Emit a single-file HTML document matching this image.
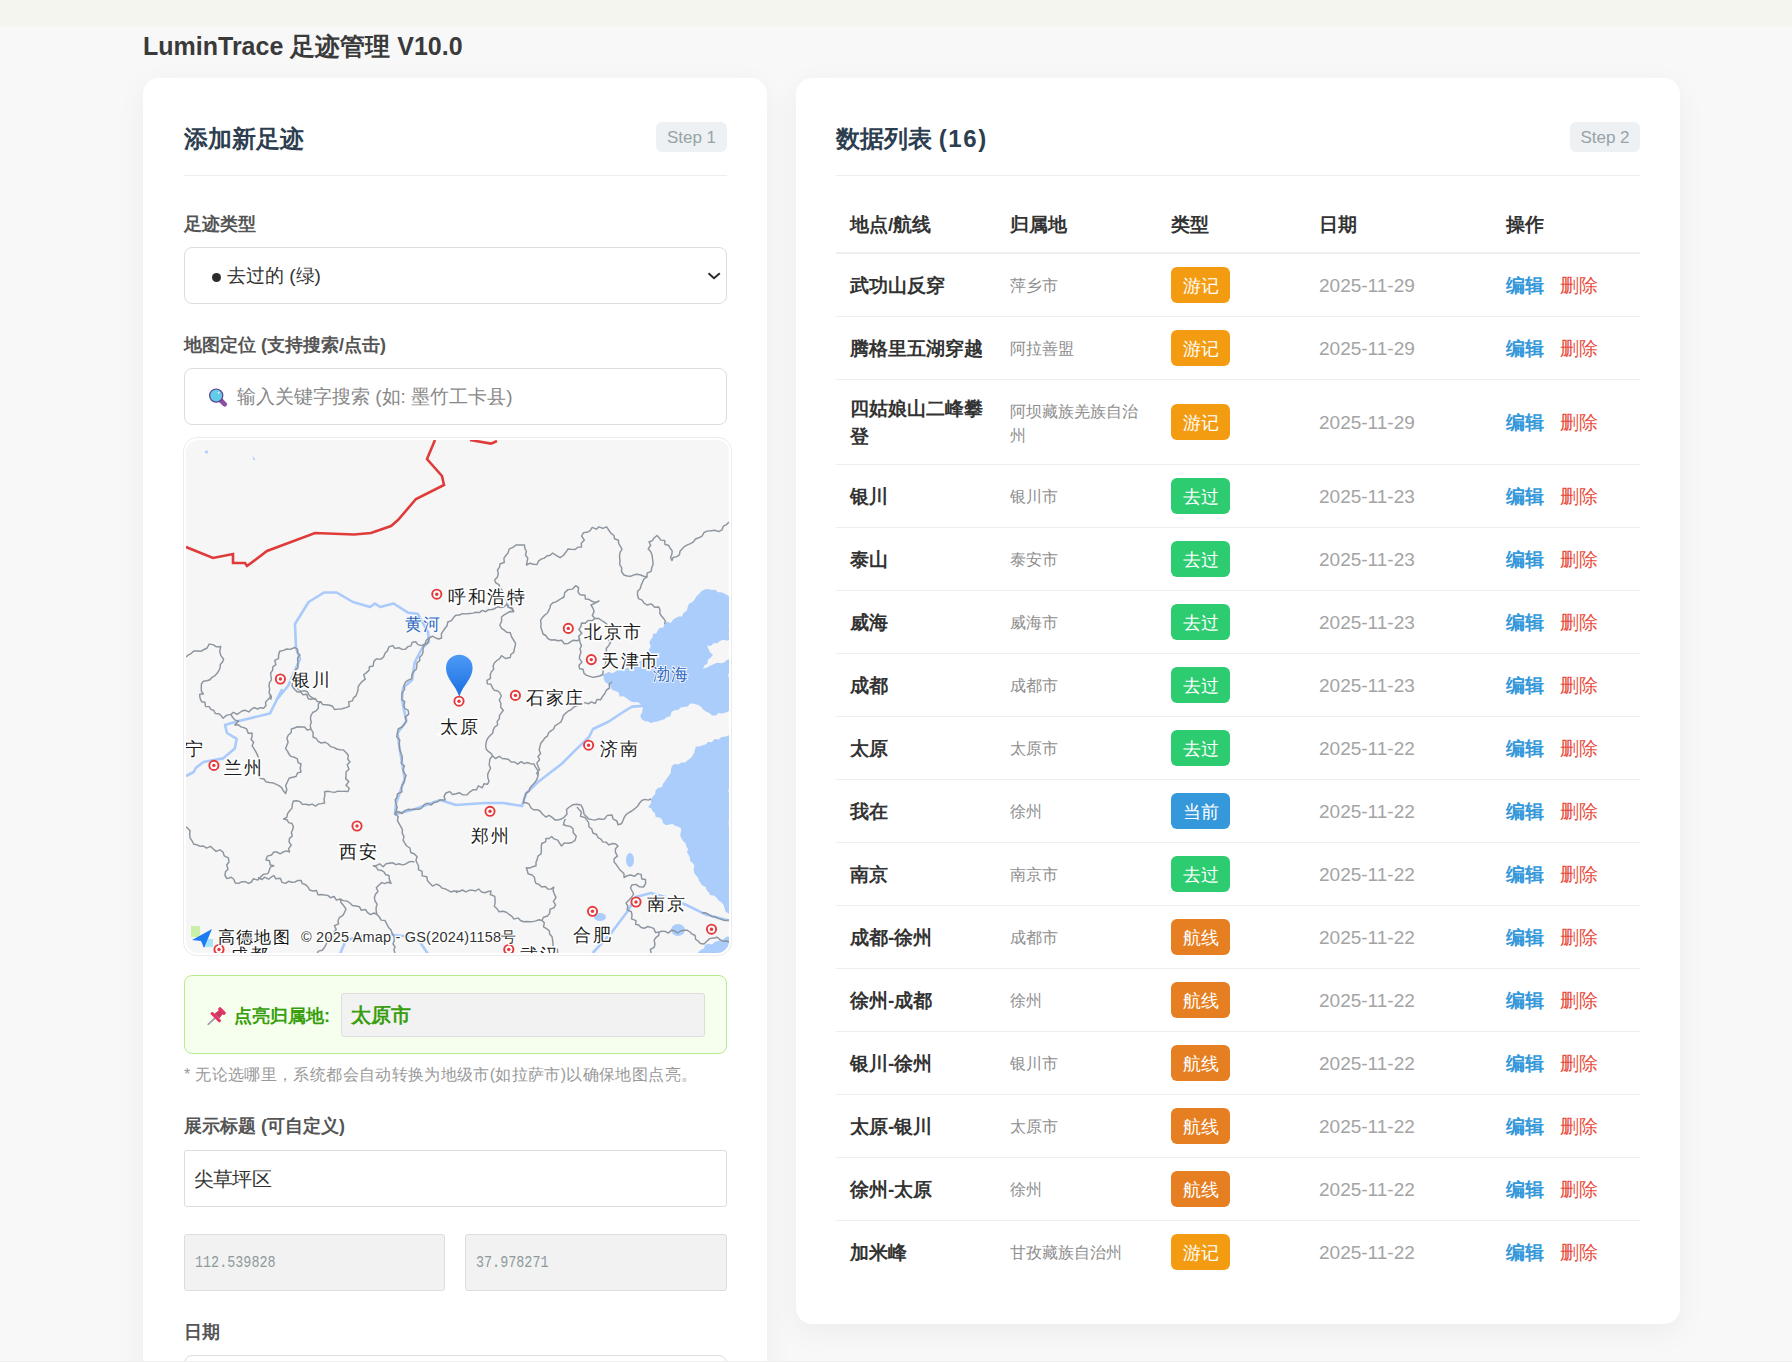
<!DOCTYPE html>
<html><head><meta charset="utf-8">
<style>
*{box-sizing:border-box;margin:0;padding:0}
html,body{width:1792px;height:1362px;overflow:hidden}
body{background:#f8f8f8;font-family:"Liberation Sans",sans-serif;position:relative;color:#333}
.topbar{position:absolute;left:0;top:0;width:1792px;height:27px;background:#f5f5f0}
.ab{position:absolute;white-space:nowrap}
.h1{left:143px;top:30px;font-size:25px;font-weight:bold;color:#3a3a3a;line-height:32px}
.card{position:absolute;background:#fff;border-radius:16px;box-shadow:0 8px 30px rgba(0,0,0,0.05)}
.ctitle{font-size:24px;font-weight:bold;color:#2c3e50;line-height:30px}
.step{background:#edf1f4;color:#97a3a6;font-size:17px;border-radius:6px;height:30px;line-height:32px;text-align:center}
.sep{height:1px;background:#eee}
.label{font-size:18px;font-weight:bold;color:#555;line-height:24px}
.input{border:1px solid #ddd;border-radius:8px;background:#fff}
.th{font-size:19px;font-weight:bold;color:#333;line-height:24px;top:213px}
.row{position:absolute;left:836px;width:804px;border-bottom:1px solid #efefeb}
.row div{position:absolute;white-space:nowrap}
.nm{left:14px;font-size:19px;font-weight:bold;color:#333;line-height:28px}
.rg{left:174px;font-size:16px;color:#8e8e8e;line-height:24px}
.bd{left:335px;width:59px;height:36px;border-radius:6px;color:#fff;font-size:18px;line-height:38px;text-align:center}
.dt{left:483px;font-size:19px;color:#a4a4a4;line-height:24px}
.ed{left:670px;font-size:19px;font-weight:bold;color:#3498db;line-height:24px}
.de{left:724px;font-size:19px;color:#e74c3c;line-height:24px}
.y{background:#f39c12}.g{background:#2ecc71}.b{background:#3498db}.o{background:#e67e22}
</style></head><body>
<div class="topbar"></div>
<div class="ab h1">LuminTrace 足迹管理 V10.0</div>

<!-- LEFT CARD -->
<div class="card" style="left:143px;top:78px;width:624px;height:1320px"></div>
<div class="ab ctitle" style="left:184px;top:124px">添加新足迹</div>
<div class="ab step" style="left:656px;top:122px;width:71px">Step 1</div>
<div class="ab sep" style="left:184px;top:175px;width:543px"></div>

<div class="ab label" style="left:184px;top:212px">足迹类型</div>
<div class="ab input" style="left:184px;top:247px;width:543px;height:57px"></div>
<div class="ab" style="left:212px;top:273px;width:9px;height:9px;border-radius:50%;background:#2b2b2b"></div><div class="ab" style="left:227px;top:263px;font-size:19px;color:#333;line-height:26px">去过的 (绿)</div>
<svg class="ab" style="left:706px;top:268px" width="16" height="14" viewBox="0 0 16 14"><path d="M2.5 5.3 L8 10.2 L13.8 5.3" fill="none" stroke="#2a2a2a" stroke-width="2"/></svg>

<div class="ab label" style="left:184px;top:333px">地图定位 (支持搜索/点击)</div>
<div class="ab input" style="left:184px;top:368px;width:543px;height:57px"></div>
<svg class="ab" style="left:207px;top:387px" width="22" height="21" viewBox="0 0 22 21"><line x1="14" y1="13.5" x2="17.8" y2="17.3" stroke="#8d4f9f" stroke-width="4.6" stroke-linecap="round"/><circle cx="9.2" cy="8.6" r="6.6" fill="#62cbea" stroke="#5a3f8a" stroke-width="1.2"/><circle cx="11.6" cy="5.8" r="1.1" fill="#cdeefa"/></svg>
<div class="ab" style="left:237px;top:384px;font-size:19px;color:#888;line-height:26px">输入关键字搜索 (如: 墨竹工卡县)</div>

<!-- MAP -->
<div class="ab" style="left:183px;top:437px;width:549px;height:519px;border:1px solid #ececec;border-radius:14px;background:#fff"></div><div class="ab" style="left:186px;top:440px;width:543px;height:513px;border-radius:12px;background:#f6f6f6;overflow:hidden" id="map"><svg style="position:absolute;left:0;top:0" width="543" height="513" viewBox="186 440 543 513">
<path d="M603.0,674.5 L605.9,673.3 L608.7,672.0 L612.1,673.2 L615.0,672.0 L617.7,669.8 L621.0,670.8 L623.9,669.5 L626.7,667.8 L630.0,668.7 L633.0,666.5 L635.0,663.0 L638.9,662.0 L642.0,660.0 L642.5,656.5 L644.3,653.9 L647.0,651.9 L649.0,649.4 L650.9,646.6 L649.3,642.9 L650.4,639.9 L652.6,637.2 L653.0,634.0 L656.4,633.3 L657.8,630.3 L659.7,627.9 L663.4,627.6 L664.6,624.3 L666.8,621.5 L670.9,622.9 L673.0,619.8 L675.7,618.0 L678.5,616.6 L682.0,616.6 L683.3,613.0 L686.8,610.8 L687.7,607.0 L689.0,603.7 L692.4,602.0 L694.7,599.6 L696.2,596.4 L698.9,594.2 L701.0,591.5 L704.5,589.4 L708.1,588.9 L712.0,590.0 L715.4,589.8 L718.0,592.3 L721.4,592.3 L724.4,593.4 L727.6,595.2 L730.0,598.0 L729.7,601.0 L730.2,604.0 L730.7,607.0 L728.9,610.0 L729.3,613.0 L730.9,616.0 L729.7,619.0 L729.9,622.0 L728.6,625.0 L729.2,628.0 L730.8,631.0 L728.3,634.0 L731.4,637.0 L730.0,640.0 L726.7,640.6 L723.2,639.7 L720.0,641.0 L717.2,643.3 L713.5,643.3 L710.8,646.0 L707.0,645.6 L708.5,649.1 L710.2,652.4 L713.0,655.0 L710.8,657.6 L707.9,659.7 L707.5,663.6 L704.4,665.5 L703.0,668.7 L706.8,667.4 L710.4,665.8 L714.0,664.0 L717.2,662.8 L720.8,663.2 L724.1,662.5 L726.8,659.9 L730.0,659.0 L729.4,662.2 L731.6,665.3 L729.3,668.5 L729.5,671.6 L728.2,674.8 L728.8,677.9 L730.8,681.1 L730.4,684.2 L729.4,687.4 L731.7,690.6 L730.1,693.7 L731.2,696.9 L731.4,700.0 L731.6,703.2 L729.0,706.3 L730.0,709.5 L727.7,711.9 L724.8,712.7 L721.8,713.4 L718.3,713.0 L716.0,715.4 L712.1,715.5 L709.3,713.0 L706.0,711.5 L703.1,709.4 L700.8,706.4 L697.6,704.7 L694.0,703.7 L690.3,703.4 L687.5,706.4 L684.0,706.9 L680.6,707.6 L678.2,709.9 L674.4,710.2 L671.5,711.9 L670.4,716.2 L667.0,717.0 L664.2,719.3 L660.9,720.3 L657.7,721.5 L654.2,721.9 L651.0,723.0 L648.0,721.4 L644.3,721.1 L641.5,719.0 L640.2,715.4 L642.2,712.3 L642.5,708.9 L643.5,705.6 L640.7,704.5 L638.2,702.2 L635.1,702.2 L632.0,702.0 L629.2,700.2 L626.5,698.2 L623.8,696.3 L619.7,696.5 L618.5,692.2 L615.4,690.9 L612.0,690.0 L610.7,686.4 L608.1,684.0 L605.0,682.0 L603.6,678.3 L603.0,674.5 M730.0,735.0 L725.9,736.4 L721.6,737.0 L718.7,739.6 L714.6,739.0 L711.9,742.2 L708.0,742.0 L705.6,744.6 L702.4,745.3 L699.4,746.6 L696.0,746.6 L694.9,749.6 L694.2,752.8 L692.7,755.6 L690.7,758.0 L688.0,760.0 L685.1,762.4 L681.5,762.5 L678.5,764.6 L674.7,764.0 L671.9,766.1 L671.0,769.4 L670.8,773.1 L668.8,775.7 L666.8,778.4 L665.1,781.1 L663.0,783.7 L662.1,787.1 L658.0,788.0 L655.6,790.3 L655.1,794.0 L653.0,796.5 L651.0,799.0 L650.9,803.5 L648.0,807.0 L651.2,808.3 L652.7,811.2 L655.0,813.3 L655.7,817.0 L659.6,817.6 L662.1,819.5 L663.0,823.0 L665.8,825.3 L669.3,824.6 L672.7,824.0 L675.5,826.1 L678.7,826.7 L681.3,829.0 L680.7,832.4 L680.2,835.8 L681.6,838.5 L683.2,841.2 L685.7,843.5 L686.3,846.5 L688.0,849.1 L687.0,852.6 L688.9,855.2 L690.0,858.0 L690.2,861.2 L692.9,863.3 L694.4,866.0 L693.5,869.6 L694.1,872.6 L695.7,875.2 L698.0,877.5 L698.8,880.6 L700.5,883.1 L702.4,885.5 L705.7,886.9 L706.5,890.0 L708.7,892.2 L710.0,895.0 L713.7,895.6 L716.4,897.6 L718.6,900.4 L721.4,902.3 L723.6,905.0 L724.6,908.2 L725.4,911.6 L728.6,913.6 L730.0,916.6 L731.6,913.6 L731.8,910.5 L731.6,907.5 L729.5,904.5 L729.0,901.5 L729.0,898.4 L728.9,895.4 L728.9,892.4 L730.4,889.4 L731.4,886.3 L731.2,883.3 L729.9,880.3 L730.6,877.3 L731.1,874.2 L728.5,871.2 L730.6,868.2 L731.5,865.1 L731.0,862.1 L730.9,859.1 L729.9,856.1 L728.8,853.0 L731.0,850.0 L729.4,847.0 L731.1,844.0 L731.7,840.9 L729.6,837.9 L729.6,834.9 L731.6,831.9 L730.8,828.8 L728.8,825.8 L728.7,822.8 L728.7,819.7 L731.5,816.7 L731.1,813.7 L728.7,810.7 L731.2,807.6 L731.7,804.6 L730.6,801.6 L729.5,798.6 L730.2,795.5 L728.7,792.5 L728.3,789.5 L731.7,786.5 L730.5,783.4 L730.1,780.4 L731.6,777.4 L729.8,774.3 L731.3,771.3 L731.2,768.3 L729.0,765.3 L729.1,762.2 L729.3,759.2 L729.1,756.2 L730.3,753.2 L729.1,750.1 L729.7,747.1 L728.7,744.1 L731.5,741.1 L729.5,738.0 L730.0,735.0 M697.0,954.0 L698.9,951.6 L701.2,949.7 L704.1,948.2 L705.0,945.0 L708.2,943.7 L711.9,944.4 L714.8,942.0 L718.0,941.0 L721.0,940.1 L724.0,939.1 L726.5,936.4 L730.0,937.0 L730.2,940.4 L731.1,943.8 L731.8,947.2 L728.9,950.6 L730.0,954.0 L727.0,955.2 L724.0,954.1 L721.0,953.2 L718.0,953.8 L715.0,954.6 L712.0,953.9 L709.0,953.8 L706.0,953.0 L703.0,955.4 L700.0,953.8 L697.0,954.0 Z" fill="#abcdfb"/>
<g fill="#abcdfb"><ellipse cx="600" cy="917" rx="6" ry="4"/><ellipse cx="630" cy="860" rx="4" ry="7"/><ellipse cx="678" cy="930" rx="7" ry="6"/><circle cx="206.5" cy="452" r="1.6"/><path d="M252.5,456 L255.5,459.5 L253.5,460 Z"/></g>
<path d="M276.7,699.6 L288,686 L300,659 L296,647.5 L295,624 L308.6,602 L324,592.5 L336.6,592.5 L353,602 L370,607 L375,603.5 L380,607 L393.5,603.5 L408,612.7 L417.7,613.7 L428,632 L429,641.7 L422.5,647.5 L414.8,662 L412,680 L403,688 L402,699.6 L404,710 L406.4,721 L397.6,733 L399.4,747.3 L404.7,779 L395.9,803.7 L395,814.2 L415.2,809 L440,800 L456,805 L485,803 L503,803 L522,806 L526,793.5 L538,782 L561.5,764 L577,748.6 L589,737 L593,729 L608,722 L624,711.5 L632,706.6 L646.4,705.6
M186,776 L193.8,772 L195.7,768 L203.5,762 L223,758.4 L234.8,748.6 L236.7,738.8 L227,733 L225,725 L238.7,721 L270,713.4 L281.7,690 L276.7,699.6
M592.7,953 L612,932 L628,910.7 L635.7,897 L651,893 L665,897 L686.5,905 L706,914.6 L729,920.5
M340,954 L346,940 L365,935.5 L389,934.5 L408,936.5 L420,942 L428,954" fill="none" stroke="#a9cafb" stroke-width="2.6" stroke-linejoin="round"/>
<path d="M506.8,604.7 L504.1,606.7 L501.1,607.5 L497.4,606.7 L494.7,608.7 L491.7,609.5 L488.4,609.7 L485.7,611.7 L482.3,610.4 L479.4,612.6 L476.1,612.3 L473.0,613.1 L469.8,613.5 L466.3,613.9 L462.7,613.6 L459.2,615.0 L455.7,615.2 L453.4,617.8 L451.4,620.6 L447.8,622.0 L447.0,625.8 L444.9,628.5 L442.9,631.3 L441.3,634.2 L441.6,638.0 L438.5,639.0 L435.5,637.8 L432.4,636.2 L429.3,638.0 L427.5,643.4 L424.2,645.2 L423.0,648.7 L423.1,652.1 L422.0,654.9 L419.6,657.3 L419.8,660.6 L417.0,662.8 L416.8,666.1 L416.3,669.3 L413.5,671.6 L411.9,674.9 L411.7,678.6 L408.3,680.1 L405.4,682.2 L403.8,685.7 L404.7,689.4 L402.0,692.6 L401.8,696.2 L402.0,699.8 L404.8,701.7 L403.8,705.8 L405.0,708.6 L408.2,710.3 L408.7,714.1 L405.2,717.1 L406.4,721.0 L404.5,724.2 L402.0,727.0 L398.2,728.8 L397.6,733.0 L396.7,736.7 L399.8,740.0 L399.2,743.7 L399.4,747.3 L399.9,750.5 L401.1,753.5 L402.2,756.6 L402.2,759.9 L401.2,763.3 L404.5,766.0 L402.9,769.5 L403.9,772.6 L406.1,775.5 L404.7,779.0 L404.2,782.3 L402.0,785.0 L401.4,788.2 L401.9,791.9 L397.4,793.8 L397.0,797.1 L395.2,800.0 L395.9,803.7 L397.2,807.3 L396.2,810.8 L395.0,814.2 L397.9,811.5 L402.0,813.5 L404.9,810.7 L408.1,809.3 L411.8,809.6 L415.2,809.0 L418.9,809.4 L421.8,807.9 L424.2,804.7 L427.1,803.2 L431.3,805.0 L433.9,802.5 L437.2,801.9 L440.0,800.0 L445.2,800.0 L444.0,796.3 L446.0,793.0 L449.6,791.6 L452.6,794.5 L456.1,793.8 L459.6,792.8 L462.8,794.9 L467.1,794.7 L470.0,791.8 L473.3,789.6 L476.5,789.7 L478.4,785.9 L482.3,787.8 L484.0,783.7 L487.4,784.3 L489.1,781.2 L487.8,777.8 L487.7,774.6 L488.8,771.5 L490.6,768.4 L489.2,765.0 L489.5,761.7 L490.2,758.5 L492.7,756.0 L491.0,753.3 L488.3,751.4 L486.2,749.1 L485.7,745.6 L486.3,741.8 L487.6,738.5 L489.9,735.7 L492.7,733.2 L493.3,730.0 L494.6,727.1 L497.6,725.0 L497.2,721.4 L499.3,718.9 L499.5,715.5 L501.4,712.9 L503.3,710.3 L500.7,707.2 L500.9,703.5 L499.3,700.1 L501.4,696.0 L499.8,692.7 L497.4,690.8 L494.1,690.2 L492.3,687.5 L490.9,684.2 L487.4,683.9 L486.9,680.4 L490.6,678.3 L490.2,674.8 L491.4,671.8 L493.7,669.3 L493.1,665.7 L494.5,662.8 L496.9,660.5 L499.7,658.6 L501.5,655.7 L505.5,658.5 L510.3,657.5 L510.8,654.5 L513.7,652.3 L514.3,649.3 L515.0,646.4 L515.6,643.4 L513.5,640.0 L511.5,636.6 L510.3,632.8 L506.6,632.3 L504.2,630.1 L501.4,628.3 L499.8,625.0 L501.6,621.2 L501.5,617.0 L504.2,614.8 L507.1,613.1 L510.1,611.5 L513.8,611.7 L512.4,608.4 L510.2,606.0 L506.8,604.7 L506.8,604.7 M494.6,580.0 L495.8,582.9 L498.9,584.6 L500.0,587.6 L502.3,590.4 L503.4,593.8 L504.1,597.2 L506.6,600.0 L506.9,603.7 L508.0,607.0 L511.5,608.6 L513.8,611.7 M494.6,580.0 L497.3,577.2 L498.3,573.9 L497.5,570.0 L499.4,567.3 L500.1,563.8 L504.3,562.5 L503.9,558.3 L505.8,555.5 L508.0,553.0 L509.3,548.9 L513.0,547.3 L516.0,545.0 L520.2,544.9 L524.5,545.0 L524.8,548.3 L526.4,551.5 L525.5,555.0 L527.8,558.1 L527.1,561.6 L526.5,565.0 L529.9,563.2 L533.5,564.3 L537.0,564.5 L538.5,561.1 L541.1,559.1 L544.3,558.1 L546.8,556.0 L550.2,555.2 L552.6,553.0 L556.2,555.4 L560.0,557.7 L563.4,555.5 L565.8,552.3 L568.0,549.0 L571.5,549.4 L575.0,549.5 L578.1,547.1 L581.5,547.0 L581.3,543.3 L584.4,540.1 L581.6,536.0 L583.5,532.6 L586.9,532.3 L589.9,530.8 L592.2,527.4 L596.4,529.2 L599.0,526.8 L602.8,528.4 L606.6,526.8 L608.7,530.0 L610.8,533.2 L614.0,535.5 L614.5,538.8 L618.4,540.2 L618.7,543.6 L620.4,546.3 L622.0,549.0 L620.0,552.6 L619.5,556.5 L620.0,560.6 L619.7,564.5 L621.7,567.9 L621.5,571.8 L624.0,575.0 L627.2,576.0 L630.5,576.3 L634.0,574.8 L637.3,574.3 L640.6,575.0 L643.8,576.2 L647.0,577.0 L647.1,573.2 L651.2,571.3 L651.7,567.7 L653.0,564.5 L652.9,561.2 L652.4,558.0 L652.0,554.7 L650.7,551.7 L648.2,548.8 L650.7,545.0 L649.0,542.0 L652.3,540.6 L654.3,537.7 L657.0,535.5 L659.1,537.7 L660.9,540.1 L664.7,540.5 L665.0,544.5 L668.5,545.2 L670.0,548.0 L672.2,550.9 L671.9,554.2 L670.6,557.6 L672.0,560.6 L673.1,557.5 L676.7,556.6 L679.4,554.9 L680.0,551.3 L682.0,549.0 L684.4,546.6 L687.4,544.9 L690.5,543.6 L693.4,541.9 L695.5,539.0 L698.8,537.8 L702.0,536.2 L704.0,532.5 L707.2,531.1 L711.0,530.7 L714.9,530.2 L718.6,531.6 L721.9,529.9 L723.3,526.2 L726.6,524.6 L729.0,522.0 M541.0,624.0 L540.6,620.4 L542.2,617.8 L544.3,615.4 L547.1,613.5 L548.5,610.8 L549.9,608.0 L550.6,605.0 L552.9,602.7 L556.0,601.9 L558.6,600.1 L561.3,598.5 L564.0,597.0 L564.7,592.6 L568.0,589.6 L572.6,589.1 L575.7,585.7 L578.6,587.7 L578.0,592.1 L580.1,594.7 L585.0,595.2 L585.4,599.0 L588.8,599.3 L592.0,601.3 L595.3,602.4 L599.0,601.0 L595.1,603.2 L591.0,605.0 L592.9,608.1 L594.1,611.4 L592.3,615.6 L595.0,618.5 L592.0,620.7 L588.1,620.4 L585.3,623.2 L581.5,623.0 L581.0,626.3 L578.9,629.5 L581.8,633.2 L578.7,636.3 L579.6,639.8 L576.7,640.7 L573.3,640.2 L570.6,641.9 L568.0,643.6 L564.3,643.7 L561.7,640.2 L557.9,640.8 L554.5,639.8 L550.8,640.0 L547.9,638.7 L545.9,635.5 L543.0,634.0 L542.1,630.7 L540.9,627.5 L541.0,624.0 M595.0,618.5 L598.8,618.5 L601.7,620.5 L604.7,622.4 L607.2,624.5 L607.5,628.3 L610.5,630.0 L612.1,633.4 L608.7,636.1 L608.0,639.2 L610.5,642.7 L608.6,645.6 L606.3,648.5 L606.5,651.9 L605.1,654.9 L606.8,658.6 L605.9,661.8 L605.2,665.0 L602.1,667.7 L603.1,671.2 L602.8,674.5 L599.7,676.0 L596.3,676.7 L593.0,677.4 L589.8,676.4 L586.7,675.4 L584.1,673.5 L583.0,669.3 L579.6,668.7 L579.0,665.3 L581.9,662.2 L579.4,658.7 L579.8,655.4 L581.0,652.2 L580.0,648.8 L581.5,645.6 L580.1,642.9 L579.6,639.8 M647.0,577.0 L643.8,579.1 L642.5,582.3 L641.1,585.4 L640.2,588.8 L637.6,591.2 L637.5,595.0 L638.6,598.7 L642.1,600.1 L644.0,603.1 L647.0,605.0 L651.2,603.9 L654.7,607.2 L658.8,607.0 L660.0,609.8 L659.8,613.1 L661.2,615.8 L663.5,618.3 L665.3,620.8 L664.6,624.3 M492.7,756.0 L495.4,758.5 L499.4,756.3 L502.1,758.5 L505.4,758.8 L508.6,759.5 L511.2,762.1 L514.6,762.0 L517.6,764.2 L521.2,761.7 L524.2,763.6 L527.6,762.5 L530.7,763.9 L534.0,764.0 L535.4,766.9 L537.3,769.6 L538.3,772.6 L538.0,776.0 L536.8,772.7 L539.6,769.5 L538.0,766.2 L536.9,762.9 L539.6,759.7 L538.0,756.4 L540.6,753.5 L539.1,749.8 L540.0,746.6 L540.8,743.2 L542.9,740.8 L544.6,738.1 L547.3,736.2 L548.5,733.0 L550.9,730.9 L553.7,729.0 L554.9,725.8 L557.8,724.0 L560.8,722.1 L562.3,719.2 L563.2,715.8 L565.4,713.4 L568.1,711.2 L571.3,709.6 L573.8,707.1 L577.0,705.6 L580.8,704.3 L584.6,702.6 L588.8,703.7 L591.4,701.9 L595.2,703.5 L597.1,699.4 L600.5,699.8 L602.5,696.5 L604.9,693.5 L606.4,690.0 L609.5,688.2 L609.2,684.0 L612.0,682.0 M538.0,776.0 L536.8,779.5 L534.8,782.6 L532.3,785.2 L530.0,788.0 L529.0,791.1 L525.9,793.3 L525.1,796.5 L523.8,799.4 L524.0,803.0 M522.4,803.0 L526.1,802.6 L529.0,804.0 L530.9,807.8 L533.5,809.8 L537.1,809.6 L540.0,811.0 L542.6,814.2 L545.8,817.0 L549.2,815.4 L552.1,817.4 L555.0,819.9 L558.2,819.9 L561.5,819.0 L564.6,816.8 L567.0,814.0 L566.5,809.5 L569.3,807.0 L572.9,804.8 L576.9,804.3 L581.0,805.0 L582.5,807.8 L583.5,811.0 L584.1,814.3 L586.5,816.6 L588.8,819.0 L591.9,819.6 L595.0,820.1 L598.2,818.8 L601.3,819.2 L604.4,819.0 L607.3,815.4 L612.0,815.0 L613.0,818.9 L616.9,821.0 L618.0,824.8 L621.5,823.7 L623.0,820.6 L624.3,817.3 L626.1,814.5 L628.8,812.6 L631.8,811.0 L634.8,808.7 L637.6,806.2 L639.6,803.0 L641.9,800.5 L644.7,799.4 L648.2,800.1 L651.0,799.0 M565.4,819.0 L564.1,821.8 L563.4,824.8 L566.8,825.7 L570.2,826.4 L573.0,828.7 L573.3,832.7 L576.3,836.2 L575.0,840.4 L571.9,842.5 L568.3,843.3 L564.2,842.9 L561.5,846.0 L559.5,843.2 L557.7,840.1 L554.1,838.9 L551.7,836.5 L549.2,838.5 L546.0,838.4 L545.6,841.8 L541.7,843.5 L541.3,846.9 L541.4,850.5 L541.1,853.9 L538.0,856.0 L537.3,859.3 L536.0,862.4 L536.0,865.8 L532.8,866.7 L529.7,868.0 L526.3,867.7 L527.3,870.7 L528.1,873.8 L532.1,875.0 L534.4,877.2 L534.9,880.4 L536.0,883.4 L539.1,884.5 L541.6,886.9 L545.4,886.5 L547.8,889.0 L551.1,889.1 L553.7,887.0 L553.1,890.7 L554.4,894.1 L556.0,897.6 L553.4,901.4 L555.6,904.8 L553.9,907.9 L550.1,909.2 L549.6,913.4 L547.4,916.0 L543.5,917.2 L542.0,920.5 L544.3,922.8 L543.5,926.8 L546.6,928.6 L549.2,930.7 L549.7,934.0 L552.0,936.7 L552.6,940.2 L553.0,943.8 L553.2,947.3 L557.5,949.3 L557.5,953.0 M577.0,807.0 L579.1,809.6 L581.4,812.0 L580.5,816.4 L585.0,817.5 L587.0,820.1 L588.7,823.0 L588.9,826.7 L591.8,829.0 L592.9,833.0 L596.6,834.5 L598.1,837.7 L600.9,839.1 L602.7,841.9 L606.4,842.3 L608.8,844.9 L612.4,843.5 L615.5,843.9 L618.0,846.0 L615.5,848.8 L615.4,852.2 L617.4,856.1 L614.2,858.6 L614.0,862.0 L616.1,864.3 L617.8,866.9 L619.6,869.4 L621.8,871.6 L624.0,873.8 L624.0,877.5 L627.2,875.7 L630.6,875.0 L634.7,876.3 L637.6,873.6 L641.1,874.4 L641.8,879.0 L645.5,879.5 L645.6,883.6 L643.5,887.0 L639.5,886.9 L635.9,884.4 L631.8,885.0 L630.5,888.0 L632.1,891.0 L633.6,894.0 L631.8,897.0 L629.0,900.1 L626.0,903.0 L627.8,905.8 L627.2,909.8 L631.3,911.7 L632.0,915.0 L631.5,918.9 L636.0,920.6 L635.7,924.4 L638.7,925.0 L641.1,927.5 L644.1,928.3 L647.9,926.5 L650.8,927.4 L653.7,928.4 L655.6,932.6 L659.0,932.0 L658.8,935.3 L655.8,937.6 L654.1,940.4 L655.0,944.2 L654.1,947.3 L650.4,949.3 L651.0,953.0 M456.0,891.0 L459.2,891.5 L462.5,890.0 L465.8,891.9 L469.0,890.3 L472.2,890.1 L475.5,891.0 L478.6,889.0 L481.7,892.0 L484.8,892.7 L487.9,891.5 L491.0,891.0 L490.3,894.5 L494.8,896.3 L495.0,899.5 L495.1,902.8 L494.3,906.3 L497.0,908.7 L499.1,911.8 L503.1,911.2 L506.3,912.2 L508.9,914.3 L511.7,916.1 L513.9,919.1 L518.1,917.9 L520.5,920.5 L523.6,921.7 L526.6,921.5 L529.7,921.8 L532.8,921.6 L535.9,920.9 L538.9,919.8 L542.0,920.5 M659.0,932.0 L662.1,931.3 L665.2,931.4 L668.3,933.1 L671.4,930.3 L674.5,930.8 L677.6,933.0 L680.7,931.0 L683.8,930.3 L686.9,930.1 L690.0,932.0 L692.2,934.2 L695.1,935.5 L695.7,939.5 L698.3,941.2 L700.4,943.5 L704.0,944.0 L706.8,941.2 L709.7,938.6 L713.8,938.0 L717.3,937.2 L720.0,939.6 L723.0,941.2 L726.3,941.0 L729.4,942.0 M702.0,912.7 L705.6,912.8 L708.6,914.5 L711.6,916.4 L715.0,917.0 L718.4,918.4 L721.8,919.5 L725.2,920.6 L729.0,920.0 M199.6,694.0 L200.0,698.0 L201.6,701.7 L204.9,702.3 L205.5,706.5 L209.2,706.6 L210.9,709.3 L213.8,710.5 L215.3,713.5 L219.0,713.7 L221.2,715.7 L223.0,718.3 L226.5,715.4 L230.9,714.4 L233.5,712.3 L237.1,714.4 L239.8,712.5 L242.4,710.8 L245.4,710.3 L248.9,711.9 L251.4,709.3 L254.0,707.5 L257.5,709.0 L260.3,707.7 L263.6,708.2 L266.0,705.6 L265.5,702.2 L267.9,699.8 L270.2,697.3 L270.0,694.0 L270.9,699.6 M231.0,714.4 L232.7,717.6 L235.1,720.1 L238.7,721.0 L234.8,725.0 L238.4,724.7 L240.9,726.9 L244.0,727.6 L246.8,729.2 L248.3,733.4 L252.0,733.0 L252.1,736.2 L251.1,739.5 L253.7,742.3 L252.1,745.7 L254.0,748.6 L256.2,752.4 L258.0,756.4 L259.0,759.7 L256.9,762.9 L256.2,766.2 L259.6,769.5 L257.6,772.7 L258.0,776.0 L260.4,778.3 L264.0,779.0 L266.0,781.8 L269.3,782.5 L272.8,782.8 L275.8,784.2 L278.9,785.6 L281.7,787.7 L283.3,790.8 L285.6,793.5 L286.8,789.7 L285.7,785.5 L287.5,781.8 L289.1,778.3 L292.5,777.3 L296.0,776.5 L297.6,772.9 L301.0,772.0 L300.2,768.0 L301.0,764.0 L298.0,762.6 L297.4,758.8 L294.5,757.3 L291.0,756.4 L288.9,754.1 L287.5,751.1 L285.6,748.6 L286.8,745.4 L288.1,742.2 L286.9,738.3 L288.2,735.2 L291.2,732.5 L291.4,729.0 L294.5,728.0 L297.6,726.8 L301.0,727.0 L304.5,726.9 L307.3,730.1 L311.0,729.0 L310.2,725.6 L311.3,722.2 L310.4,718.8 L311.0,715.4 L312.7,712.5 L316.1,710.8 L318.4,708.3 L318.3,704.1 L320.7,701.7 L317.3,701.6 L315.2,698.4 L311.5,699.2 L308.2,698.7 L306.7,694.2 L303.0,694.7 L300.7,692.0 L297.3,692.0 L294.4,689.2 L292.0,686.0 M320.7,701.7 L322.7,704.6 L326.3,704.7 L329.6,705.2 L332.6,706.3 L334.4,709.5 L338.3,709.1 L342.2,708.8 L346.0,707.6 L349.2,706.3 L348.7,701.9 L352.3,700.9 L353.5,697.9 L355.9,695.9 L357.0,693.0 L358.0,690.0 L358.2,686.5 L360.1,683.8 L362.4,681.3 L365.2,679.2 L363.7,674.8 L366.5,672.6 L369.1,670.2 L369.4,666.8 L373.2,666.0 L373.8,661.4 L376.2,658.9 L381.0,659.1 L383.6,657.0 L385.0,653.3 L387.5,650.7 L388.8,646.9 L392.6,645.6 L395.1,648.4 L399.0,647.7 L402.0,649.4 L405.5,649.3 L407.7,646.7 L410.9,645.9 L412.3,642.1 L415.7,641.7 L418.0,644.6 L421.5,645.6 M311.0,729.0 L313.1,732.7 L313.0,737.0 L316.1,738.3 L318.2,741.4 L321.1,743.0 L325.3,742.3 L328.1,744.0 L330.5,746.6 L333.7,747.4 L336.7,749.0 L340.0,749.7 L343.4,749.9 L346.0,752.5 L348.3,755.3 L347.8,759.2 L350.0,762.0 L347.2,764.7 L349.0,769.3 L346.0,772.0 L346.1,775.3 L345.6,778.6 L348.8,781.6 L346.0,785.2 L349.2,788.2 L348.0,791.6 L344.7,791.2 L341.3,791.4 L338.0,791.1 L334.6,792.4 L331.3,791.9 L327.9,791.3 L324.6,791.6 L324.9,795.4 L324.0,799.2 L324.6,803.0 L321.5,803.6 L318.4,804.0 L315.5,806.1 L312.1,804.1 L309.0,805.0 L305.9,804.2 L302.5,804.4 L299.9,801.6 L296.8,800.7 L293.4,801.0 L292.3,804.4 L292.0,808.1 L289.5,811.0 L287.6,813.7 L286.8,817.3 L283.6,819.0 L287.0,819.8 L288.7,822.6 L292.0,823.5 L293.4,826.7 L292.6,829.7 L291.4,832.5 L292.2,836.1 L289.5,838.4 L289.0,841.8 L291.2,845.2 L288.6,848.6 L289.5,852.0 L286.4,850.9 L283.2,852.0 L280.1,853.8 L276.9,852.0 L273.8,852.0 L271.5,855.0 L267.3,856.1 L266.0,860.0 L269.5,860.8 L270.3,865.0 L273.8,865.8 L270.3,867.2 L269.2,870.4 L268.0,873.6 L263.4,874.4 L260.0,877.5 L257.7,880.1 L253.4,878.7 L251.4,882.0 L248.5,883.4 L245.2,881.6 L242.0,881.7 L238.7,883.4 L235.3,883.0 L233.8,879.2 L231.3,877.2 L226.9,878.6 L225.0,875.5 L225.4,872.0 L228.0,869.0 L226.7,865.0 L229.0,862.0 L228.4,857.9 L224.2,855.8 L223.0,852.0 L220.1,849.8 L216.1,851.4 L213.3,849.0 L210.5,846.4 L206.4,848.1 L203.5,846.0 L200.1,846.4 L197.0,844.8 L193.8,844.3 L192.2,841.1 L190.1,837.9 L189.7,834.4 L190.0,830.6 L186.0,826.7 M258.0,877.5 L262.0,879.5 L264.5,877.2 L268.5,879.2 L271.1,877.2 L273.8,875.5 L275.9,878.8 L280.4,878.3 L282.0,882.4 L285.6,883.4 L288.4,881.3 L291.8,882.3 L294.9,882.1 L297.8,880.4 L301.0,880.4 L302.4,883.6 L305.7,884.8 L308.0,887.0 L309.6,890.0 L313.0,891.0 L316.4,890.5 L318.2,894.9 L321.5,894.5 L324.6,895.0 L327.8,895.4 L330.5,897.8 L334.1,896.5 L336.4,900.1 L340.0,899.0 L343.2,900.6 L346.9,901.1 L350.0,903.0 L352.4,905.5 L356.0,906.0 L359.4,906.7 L361.3,910.3 L365.5,909.5 L367.6,912.7 L370.5,914.6 L374.1,913.0 L377.0,914.6 L379.3,917.0 L381.2,920.1 L385.0,920.5 L386.7,923.9 L388.4,927.2 L391.0,930.0 L392.2,933.4 L394.0,936.7 L394.3,940.2 L393.0,944.0 L395.0,946.7 L393.9,950.1 L395.0,953.0 M377.0,914.6 L376.2,911.2 L376.1,907.8 L377.1,904.2 L375.0,901.0 L374.4,897.4 L375.5,894.3 L378.0,891.5 L376.3,887.7 L379.0,885.0 L381.7,882.6 L384.9,883.6 L387.8,882.2 L391.0,883.4 L389.4,879.6 L389.0,875.5 L385.8,874.8 L384.0,872.0 L381.4,870.3 L378.0,870.0 L376.3,867.0 L373.4,865.8 L376.6,865.4 L379.7,863.8 L383.1,866.8 L386.1,863.8 L389.3,863.2 L392.5,862.7 L395.8,864.6 L399.0,863.8 L402.3,864.9 L405.3,864.2 L408.3,862.3 L411.3,861.4 L414.5,862.0 M395.0,814.2 L398.2,816.5 L397.4,820.7 L399.1,823.7 L400.8,826.7 L402.4,829.7 L402.2,833.3 L404.0,836.3 L403.1,840.1 L404.8,843.1 L406.7,846.0 L410.0,848.0 L410.7,852.5 L414.5,854.0 L417.1,856.7 L415.9,860.3 L417.2,863.3 L418.6,866.3 L418.4,869.7 L422.1,871.3 L422.2,875.9 L426.8,876.7 L427.5,880.8 L430.0,883.4 L432.5,886.1 L436.6,884.2 L439.5,885.5 L442.0,888.1 L445.2,888.8 L448.1,890.3 L450.9,892.0 L454.8,890.7 L457.4,893.0 M186.0,657.0 L188.5,654.8 L191.4,653.3 L193.8,650.9 L197.5,651.0 L201.2,651.2 L204.1,649.5 L207.1,648.0 L209.1,644.1 L213.0,644.6 L216.5,646.9 L220.7,646.5 L219.7,651.4 L220.8,655.6 L223.6,659.0 L222.5,662.0 L220.3,664.5 L220.2,667.8 L218.8,670.7 L217.0,673.5 L214.8,675.8 L212.0,677.3 L210.0,679.8 L206.8,680.7 L203.3,681.3 L201.4,684.0 L201.3,687.5 L201.3,690.9 L203.3,694.0 L199.6,694.0 M270.9,699.6 L271.3,696.1 L269.0,692.9 L269.7,689.4 L269.0,686.0 L269.4,682.8 L271.4,679.8 L271.0,676.4 L270.6,673.0 L272.7,670.1 L272.8,666.8 L275.9,664.7 L274.7,660.4 L278.5,658.6 L278.6,655.0 L279.7,651.3 L283.5,650.4 L286.6,649.0 L290.0,649.4 L295.0,647.5 L297.5,649.4 L297.5,653.0 L300.0,655.0 L297.6,658.0 L297.7,661.5 L298.0,665.0 L297.8,668.2 L294.8,670.6 L296.1,674.2 L295.6,677.3 L292.1,679.6 L292.4,682.9 L292.0,686.0 L294.8,687.9 L298.0,689.0 L300.7,691.4 L304.5,690.7 L307.6,692.0 L309.2,695.5 L312.2,697.6 L315.3,699.6 M421.5,645.6 L425.0,644.0 L426.3,640.2 L429.0,637.8 M340.0,899.0 L341.2,902.8 L343.8,905.8 L346.0,909.0 L344.6,912.3 L342.9,915.4 L339.6,917.3 L338.0,920.5 L338.6,923.9 L334.4,925.7 L336.3,929.6 L334.0,932.0 L333.6,935.6 L331.5,937.9 L327.0,938.3 L326.9,942.2 L325.7,945.1 L324.2,947.8 L322.2,950.2 L318.3,951.1 L317.0,954.0" fill="none" stroke="#8d959e" stroke-width="1.45" stroke-linejoin="round"/>
<path d="M186,547 L213,558 L233,554 L233,563 L245,563 L247,566 L267,551 L315,533 L354,534.5 L371,533 L391,526 L398,520 L416,499 L444,485 L442,476 L427,459 L435,440 M470,440 L491,443.6 L497,441" fill="none" stroke="#df3b3b" stroke-width="2.6" stroke-linejoin="miter"/>
<circle cx="436.8" cy="594.2" r="4.6" fill="#fff" stroke="#e5393b" stroke-width="1.9"/><circle cx="436.8" cy="594.2" r="1.7" fill="#e5393b"/>
<circle cx="568.3" cy="628.4" r="4.6" fill="#fff" stroke="#e5393b" stroke-width="1.9"/><circle cx="568.3" cy="628.4" r="1.7" fill="#e5393b"/>
<circle cx="591.3" cy="659.6" r="4.6" fill="#fff" stroke="#e5393b" stroke-width="1.9"/><circle cx="591.3" cy="659.6" r="1.7" fill="#e5393b"/>
<circle cx="515.4" cy="695.4" r="4.6" fill="#fff" stroke="#e5393b" stroke-width="1.9"/><circle cx="515.4" cy="695.4" r="1.7" fill="#e5393b"/>
<circle cx="588.6" cy="745.2" r="4.6" fill="#fff" stroke="#e5393b" stroke-width="1.9"/><circle cx="588.6" cy="745.2" r="1.7" fill="#e5393b"/>
<circle cx="280.4" cy="679" r="4.6" fill="#fff" stroke="#e5393b" stroke-width="1.9"/><circle cx="280.4" cy="679" r="1.7" fill="#e5393b"/>
<circle cx="459" cy="701.2" r="4.6" fill="#fff" stroke="#e5393b" stroke-width="1.9"/><circle cx="459" cy="701.2" r="1.7" fill="#e5393b"/>
<circle cx="213.9" cy="765.4" r="4.6" fill="#fff" stroke="#e5393b" stroke-width="1.9"/><circle cx="213.9" cy="765.4" r="1.7" fill="#e5393b"/>
<circle cx="490" cy="811.3" r="4.6" fill="#fff" stroke="#e5393b" stroke-width="1.9"/><circle cx="490" cy="811.3" r="1.7" fill="#e5393b"/>
<circle cx="357" cy="826" r="4.6" fill="#fff" stroke="#e5393b" stroke-width="1.9"/><circle cx="357" cy="826" r="1.7" fill="#e5393b"/>
<circle cx="636" cy="902" r="4.6" fill="#fff" stroke="#e5393b" stroke-width="1.9"/><circle cx="636" cy="902" r="1.7" fill="#e5393b"/>
<circle cx="592.5" cy="911.3" r="4.6" fill="#fff" stroke="#e5393b" stroke-width="1.9"/><circle cx="592.5" cy="911.3" r="1.7" fill="#e5393b"/>
<circle cx="711.5" cy="929.2" r="4.6" fill="#fff" stroke="#e5393b" stroke-width="1.9"/><circle cx="711.5" cy="929.2" r="1.7" fill="#e5393b"/>
<circle cx="219" cy="949.5" r="4.6" fill="#fff" stroke="#e5393b" stroke-width="1.9"/><circle cx="219" cy="949.5" r="1.7" fill="#e5393b"/>
<circle cx="508.8" cy="949.5" r="4.6" fill="#fff" stroke="#e5393b" stroke-width="1.9"/><circle cx="508.8" cy="949.5" r="1.7" fill="#e5393b"/>
<g font-family="Liberation Sans, sans-serif" font-size="18" font-weight="500" fill="#1a1a1a" stroke="#fff" stroke-width="3" paint-order="stroke" letter-spacing="1.7">
<text x="448" y="602.5">呼和浩特</text>
<text x="584" y="637.5">北京市</text>
<text x="601" y="666.5">天津市</text>
<text x="526" y="703.5">石家庄</text>
<text x="600" y="754.5">济南</text>
<text x="292" y="686">银川</text>
<text x="440" y="732.5">太原</text>
<text x="224" y="773.5">兰州</text>
<text x="185" y="754.5">宁</text>
<text x="471" y="842">郑州</text>
<text x="339" y="857.5">西安</text>
<text x="647" y="910">南京</text>
<text x="573" y="941">合肥</text>
<text x="230" y="961">成都</text>
<text x="520" y="961">武汉</text>
</g>
<g font-family="Liberation Sans, sans-serif" font-size="17" font-weight="500" fill="#2a66c2" stroke="#fff" stroke-width="1.5" paint-order="stroke" letter-spacing="1"><text x="405" y="630">黄河</text><text x="653" y="679.5">渤海</text></g>
<defs><linearGradient id="pg" x1="0" y1="0" x2="0" y2="1"><stop offset="0" stop-color="#4d9bf7"/><stop offset="1" stop-color="#1a6fe0"/></linearGradient></defs>
<path d="M459.3,696.5 C455,684 446,679 446,668 A13.3,13.3 0 1 1 472.6,668 C472.6,679 463.6,684 459.3,696.5 Z" fill="url(#pg)"/>
<g><rect x="191" y="926" width="9" height="11" fill="#c8f0a8"/><rect x="203" y="939" width="10" height="8" fill="#a8e4fa"/><path d="M192,940 L212,929 L204,948 L201,941 Z" fill="#1d7cf2"/></g>
<text x="218" y="943" font-family="Liberation Sans, sans-serif" font-size="17" fill="#111" stroke="#fff" stroke-width="2" paint-order="stroke" letter-spacing="1.2">高德地图</text>
<text x="301" y="942" font-family="Liberation Sans, sans-serif" font-size="14.5" fill="#333" stroke="#fff" stroke-width="2.5" paint-order="stroke" letter-spacing="0.2">© 2025 Amap - GS(2024)1158号</text>
</svg></div>

<!-- green box -->
<div class="ab" style="left:184px;top:975px;width:543px;height:79px;border:1px solid #b7eb8f;border-radius:8px;background:#f6ffed"></div>
<svg class="ab" style="left:207px;top:1006px" width="20" height="19" viewBox="0 0 20 19"><line x1="8.5" y1="11.5" x2="1.2" y2="18.3" stroke="#9a9aa0" stroke-width="1.6" stroke-linecap="round"/><g transform="rotate(45 12 8)"><rect x="5.5" y="11" width="13" height="3" rx="1.2" fill="#e9306a"/><path d="M8.5,11 L9.5,5 L14.5,5 L15.5,11 Z" fill="#c93a60"/><rect x="7.5" y="2" width="9" height="3.6" rx="1.5" fill="#e9306a"/><line x1="12" y1="14" x2="12" y2="18" stroke="#9a9aa0" stroke-width="1.4"/></g></svg>
<div class="ab" style="left:234px;top:1003px;font-size:18px;font-weight:bold;color:#389e0d;line-height:26px">点亮归属地:</div>
<div class="ab" style="left:341px;top:993px;width:364px;height:44px;background:#f2f2f2;border:1px solid #ddd;border-radius:3px"></div>
<div class="ab" style="left:351px;top:1001px;font-size:20px;font-weight:bold;color:#389e0d;line-height:28px">太原市</div>
<div class="ab" style="left:184px;top:1064px;font-size:16px;letter-spacing:0.35px;color:#999;line-height:22px">* 无论选哪里，系统都会自动转换为地级市(如拉萨市)以确保地图点亮。</div>

<div class="ab label" style="left:184px;top:1114px">展示标题 (可自定义)</div>
<div class="ab" style="left:184px;top:1150px;width:543px;height:57px;border:1px solid #ddd;border-radius:3px;background:#fff"></div>
<div class="ab" style="left:194px;top:1165px;font-size:20px;letter-spacing:-0.8px;color:#333;line-height:28px">尖草坪区</div>

<div class="ab" style="left:184px;top:1234px;width:261px;height:57px;border:1px solid #ddd;border-radius:3px;background:#f2f2f2"></div>
<div class="ab" style="left:465px;top:1234px;width:262px;height:57px;border:1px solid #ddd;border-radius:3px;background:#f2f2f2"></div>
<div class="ab" style="left:195px;top:1253px;font-family:'Liberation Mono',monospace;font-size:17px;color:#8e9a9b;line-height:20px;transform:scaleX(0.79);transform-origin:0 0">112.539828</div>
<div class="ab" style="left:476px;top:1253px;font-family:'Liberation Mono',monospace;font-size:17px;color:#8e9a9b;line-height:20px;transform:scaleX(0.79);transform-origin:0 0">37.978271</div>

<div class="ab label" style="left:184px;top:1320px">日期</div>
<div class="ab input" style="left:184px;top:1355px;width:543px;height:57px"></div>

<!-- RIGHT CARD -->
<div class="card" style="left:796px;top:78px;width:884px;height:1246px"></div>
<div class="ab ctitle" style="left:836px;top:124px">数据列表 <span style="letter-spacing:1.6px">(16)</span></div>
<div class="ab step" style="left:1570px;top:122px;width:70px">Step 2</div>
<div class="ab sep" style="left:836px;top:175px;width:804px"></div>

<div class="ab th" style="left:850px">地点/航线</div>
<div class="ab th" style="left:1010px">归属地</div>
<div class="ab th" style="left:1171px">类型</div>
<div class="ab th" style="left:1319px">日期</div>
<div class="ab th" style="left:1506px">操作</div>
<div class="ab" style="left:836px;top:252px;width:804px;height:2px;background:#eeeeea"></div>

<div class="ab" style="left:0;top:1361px;width:1792px;height:1px;background:#efefef;z-index:5"></div>
<!--ROWS--><div class="row" style="top:254px;height:63px"><div class="nm" style="top:18px">武功山反穿</div><div class="rg" style="top:20px">萍乡市</div><div class="bd y" style="top:13px">游记</div><div class="dt" style="top:20px">2025-11-29</div><div class="ed" style="top:20px">编辑</div><div class="de" style="top:20px">删除</div></div>
<div class="row" style="top:317px;height:63px"><div class="nm" style="top:18px">腾格里五湖穿越</div><div class="rg" style="top:20px">阿拉善盟</div><div class="bd y" style="top:13px">游记</div><div class="dt" style="top:20px">2025-11-29</div><div class="ed" style="top:20px">编辑</div><div class="de" style="top:20px">删除</div></div>
<div class="row" style="top:380px;height:85px"><div class="nm" style="top:15px">四姑娘山二峰攀<br>登</div><div class="rg" style="top:20px">阿坝藏族羌族自治<br>州</div><div class="bd y" style="top:24px">游记</div><div class="dt" style="top:31px">2025-11-29</div><div class="ed" style="top:31px">编辑</div><div class="de" style="top:31px">删除</div></div>
<div class="row" style="top:465px;height:63px"><div class="nm" style="top:18px">银川</div><div class="rg" style="top:20px">银川市</div><div class="bd g" style="top:13px">去过</div><div class="dt" style="top:20px">2025-11-23</div><div class="ed" style="top:20px">编辑</div><div class="de" style="top:20px">删除</div></div>
<div class="row" style="top:528px;height:63px"><div class="nm" style="top:18px">泰山</div><div class="rg" style="top:20px">泰安市</div><div class="bd g" style="top:13px">去过</div><div class="dt" style="top:20px">2025-11-23</div><div class="ed" style="top:20px">编辑</div><div class="de" style="top:20px">删除</div></div>
<div class="row" style="top:591px;height:63px"><div class="nm" style="top:18px">威海</div><div class="rg" style="top:20px">威海市</div><div class="bd g" style="top:13px">去过</div><div class="dt" style="top:20px">2025-11-23</div><div class="ed" style="top:20px">编辑</div><div class="de" style="top:20px">删除</div></div>
<div class="row" style="top:654px;height:63px"><div class="nm" style="top:18px">成都</div><div class="rg" style="top:20px">成都市</div><div class="bd g" style="top:13px">去过</div><div class="dt" style="top:20px">2025-11-23</div><div class="ed" style="top:20px">编辑</div><div class="de" style="top:20px">删除</div></div>
<div class="row" style="top:717px;height:63px"><div class="nm" style="top:18px">太原</div><div class="rg" style="top:20px">太原市</div><div class="bd g" style="top:13px">去过</div><div class="dt" style="top:20px">2025-11-22</div><div class="ed" style="top:20px">编辑</div><div class="de" style="top:20px">删除</div></div>
<div class="row" style="top:780px;height:63px"><div class="nm" style="top:18px">我在</div><div class="rg" style="top:20px">徐州</div><div class="bd b" style="top:13px">当前</div><div class="dt" style="top:20px">2025-11-22</div><div class="ed" style="top:20px">编辑</div><div class="de" style="top:20px">删除</div></div>
<div class="row" style="top:843px;height:63px"><div class="nm" style="top:18px">南京</div><div class="rg" style="top:20px">南京市</div><div class="bd g" style="top:13px">去过</div><div class="dt" style="top:20px">2025-11-22</div><div class="ed" style="top:20px">编辑</div><div class="de" style="top:20px">删除</div></div>
<div class="row" style="top:906px;height:63px"><div class="nm" style="top:18px">成都-徐州</div><div class="rg" style="top:20px">成都市</div><div class="bd o" style="top:13px">航线</div><div class="dt" style="top:20px">2025-11-22</div><div class="ed" style="top:20px">编辑</div><div class="de" style="top:20px">删除</div></div>
<div class="row" style="top:969px;height:63px"><div class="nm" style="top:18px">徐州-成都</div><div class="rg" style="top:20px">徐州</div><div class="bd o" style="top:13px">航线</div><div class="dt" style="top:20px">2025-11-22</div><div class="ed" style="top:20px">编辑</div><div class="de" style="top:20px">删除</div></div>
<div class="row" style="top:1032px;height:63px"><div class="nm" style="top:18px">银川-徐州</div><div class="rg" style="top:20px">银川市</div><div class="bd o" style="top:13px">航线</div><div class="dt" style="top:20px">2025-11-22</div><div class="ed" style="top:20px">编辑</div><div class="de" style="top:20px">删除</div></div>
<div class="row" style="top:1095px;height:63px"><div class="nm" style="top:18px">太原-银川</div><div class="rg" style="top:20px">太原市</div><div class="bd o" style="top:13px">航线</div><div class="dt" style="top:20px">2025-11-22</div><div class="ed" style="top:20px">编辑</div><div class="de" style="top:20px">删除</div></div>
<div class="row" style="top:1158px;height:63px"><div class="nm" style="top:18px">徐州-太原</div><div class="rg" style="top:20px">徐州</div><div class="bd o" style="top:13px">航线</div><div class="dt" style="top:20px">2025-11-22</div><div class="ed" style="top:20px">编辑</div><div class="de" style="top:20px">删除</div></div>
<div class="row" style="top:1221px;height:63px;border-bottom:none"><div class="nm" style="top:18px">加米峰</div><div class="rg" style="top:20px">甘孜藏族自治州</div><div class="bd y" style="top:13px">游记</div><div class="dt" style="top:20px">2025-11-22</div><div class="ed" style="top:20px">编辑</div><div class="de" style="top:20px">删除</div></div><!--/ROWS-->
</body></html>
